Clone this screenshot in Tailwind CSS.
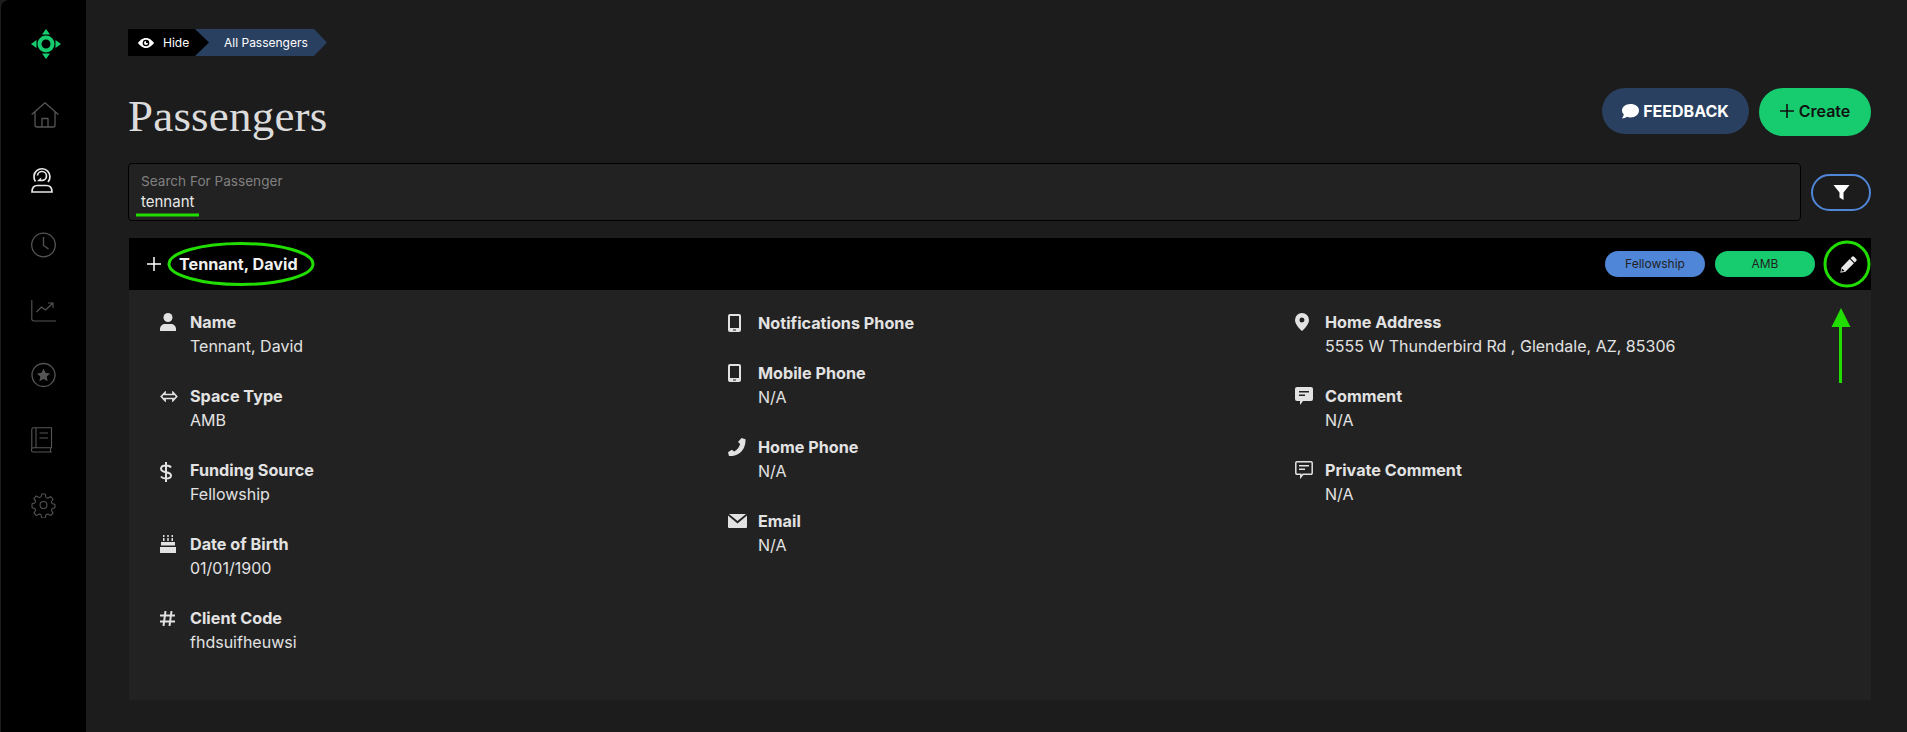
<!DOCTYPE html>
<html lang="en">
<head>
  <meta charset="UTF-8">
  <meta name="viewport" content="width=device-width, initial-scale=1.0">
  <title>Passengers</title>
  <script src="https://cdn.jsdelivr.net/npm/@tailwindcss/browser@4"></script>
</head>
<body class="bg-[#1c1c1c] font-['Inter',sans-serif] text-[#e2e2e2] h-[732px] overflow-hidden relative flex">

  <!-- Sidebar -->
  <nav class="w-[85px] ml-px h-full bg-black rounded-tl-lg flex flex-col items-start shrink-0 pt-[29px] pl-[30px]">
    <svg class="w-[30px] h-[30px] text-[#16cc6e]" viewBox="0 0 30 30" fill="currentColor">
      <circle cx="15" cy="15" r="6.500" fill="none" stroke="currentColor" stroke-width="4"/>
      <path d="M15 0l4 5.500h-8zM15 30l-4-5.500h8zM0 15l5.500-4v8zM30 15l-5.500 4v-8z"/>
    </svg>
    <div class="flex flex-col items-start gap-[39px] mt-[43px] text-[#555]">
      <svg class="w-[28px] h-[26px]" viewBox="0 0 28 26" fill="none" stroke="currentColor" stroke-width="1.300" stroke-linejoin="round"><path d="M.7 12.500L14 .8l13.300 11.700M4 9.500V23a2 2 0 0 0 2 2h16a2 2 0 0 0 2-2V9.500M11 25v-8.500h6V25"/></svg>
      <svg class="w-[22px] h-[26px] text-[#e8e8e8]" viewBox="0 0 22 26" fill="none" stroke="currentColor" stroke-width="1.700"><path d="M4.500 14.500A8 8 0 1 1 17 15"/><path d="M6.500 8.500a4.500 4.500 0 1 1 4.500 5H8l2-2"/><path d="M1 25c0-4.500 2.500-6.500 5.500-6.500h9c3 0 5.500 2 5.500 6.500z"/></svg>
      <svg class="w-[25px] h-[26px]" viewBox="0 0 25 26" fill="none" stroke="currentColor" stroke-width="1.300"><circle cx="12.500" cy="13" r="11.800"/><path d="M12.500 5v8.500l5 3.500"/></svg>
      <svg class="w-[25px] h-[26px]" viewBox="0 0 25 26" fill="none" stroke="currentColor" stroke-width="1.100"><path d="M.8 3v19a2 2 0 0 0 2 2H25"/><path d="M5.500 15l5-5 4 3 7-6.500M17 6h5v5"/></svg>
      <svg class="w-[25px] h-[26px]" viewBox="0 0 25 26" fill="none" stroke="currentColor" stroke-width="1.300"><circle cx="12.500" cy="13" r="11.500"/><path fill="currentColor" stroke="none" d="M12.500 6.500l2 4.300 4.600.6-3.400 3.200.9 4.600-4.100-2.300-4.100 2.300.9-4.600-3.400-3.200 4.600-.6z"/></svg>
      <svg class="w-[22px] h-[26px]" viewBox="0 0 22 26" fill="none" stroke="currentColor" stroke-width="1.100"><path d="M.8 22V2.500A1.700 1.700 0 0 1 2.500.8h18v20H2.500a2 2 0 0 0 0 4.200h18.300M5 .8v20M8.500 6h8.500M8.500 11h8.500M19.500 21v4"/></svg>
      <svg class="w-[25px] h-[26px]" viewBox="0 0 24 24" fill="none" stroke="currentColor" stroke-width="1" stroke-linejoin="round"><circle cx="12" cy="12" r="3.300"/><path d="M10.300 1.500h3.400l.7 3.200 1.800.8 2.700-1.600 2.300 2.600-1.600 2.400.7 1.800 2.700.6v3.400l-2.700.7-.7 1.800 1.600 2.400-2.300 2.600-2.700-1.600-1.800.8-.7 3h-3.400l-.7-3-1.800-.8-2.700 1.600-2.300-2.600 1.600-2.400-.7-1.800-2.700-.7V10.700l2.700-.6.7-1.800-1.600-2.400 2.300-2.600 2.700 1.600 1.800-.8z"/></svg>
    </div>
  </nav>

  <!-- Main -->
  <main class="flex-1 pl-[42px] pr-[36px] pt-[29px] min-w-0">
    <div class="flex h-[27px] text-[12px] text-white">
      <div class="w-[81px] bg-black flex items-center pl-[10px] gap-[9px] [clip-path:polygon(0_0,67px_0,81px_50%,67px_100%,0_100%)] relative z-10">
        <svg class="w-[16px] h-[16px]" viewBox="0 0 24 24" fill="currentColor"><path fill-rule="evenodd" d="M12 4.500C6.500 4.500 2.500 8.500 0 12c2.500 3.500 6.500 7.500 12 7.500s9.500-4 12-7.500c-2.500-3.500-6.500-7.500-12-7.500zM12 7a5 5 0 1 1 0 10 5 5 0 0 1 0-10z"/><path d="M12 9a3 3 0 1 0 3 3h-3z"/></svg>
        <span>Hide</span>
      </div>
      <div class="w-[132px] -ml-[14px] bg-[#2a4060] flex items-center pl-[29px] [clip-path:polygon(0_0,119px_0,132px_50%,119px_100%,0_100%)]">All Passengers</div>
    </div>

    <div class="flex justify-between items-start mt-[32px]">
      <h1 class="font-['Liberation_Serif',serif] text-[45px] leading-[56px] text-[#dcdcdc] tracking-[0.2px]">Passengers</h1>
      <div class="flex gap-[10px] items-start">
        <button class="w-[147px] h-[46px] rounded-full bg-[#2a4060] text-white font-bold text-[16px] flex items-center justify-center gap-[4px]">
          <svg class="w-[17px] h-[15px]" viewBox="0 0 17 15" fill="currentColor"><path d="M8.500 0C3.800 0 0 2.900 0 6.500c0 1.500.7 2.900 1.800 4C1.500 12 .6 13.400 0 14.500c1.800 0 3.700-.8 4.800-1.700 1.100.4 2.400.7 3.700.7 4.700 0 8.500-3 8.500-7S13.200 0 8.500 0z"/></svg>
          FEEDBACK
        </button>
        <button class="w-[112px] h-[48px] rounded-full bg-[#16cc6e] text-[#111] font-semibold text-[16px] flex items-center justify-center gap-[5px] pb-[2px]">
          <svg class="w-[14px] h-[14px]" viewBox="0 0 14 14" stroke="currentColor" stroke-width="1.600"><path d="M7 0v14M0 7h14"/></svg>
          Create
        </button>
      </div>
    </div>

    <div class="flex items-center gap-[10px] mt-[19px]">
      <div class="flex-1 h-[58px] bg-[#222] border border-black rounded-[4px] pl-[12px] pt-[7px]">
        <div class="text-[13.600px] leading-[20px] text-[#808080]">Search For Passenger</div>
        <div class="text-[15px] leading-[20px] text-[#e8e8e8] mt-px">tennant</div>
      </div>
      <button class="w-[60px] h-[37px] rounded-full border-2 border-[#4f86d8] bg-[#1c1c1c] flex items-center justify-center">
        <svg class="w-[17px] h-[15px] text-white" viewBox="0 0 16 15" fill="currentColor"><path d="M0 0h16L10 7.500V15l-4-2.500V7.500z"/></svg>
      </button>
    </div>

    <section class="mt-[17px] bg-[#222] h-[462px] ml-px">
      <div class="h-[52px] bg-black flex items-center pl-[18px]">
        <svg class="w-[14px] h-[14px] text-white" viewBox="0 0 14 14" stroke="currentColor" stroke-width="1.500"><path d="M7 0v14M0 7h14"/></svg>
        <span class="ml-[18px] font-bold text-[16.200px] text-[#f0f0f0]">Tennant, David</span>
        <span class="ml-auto w-[100px] h-[26px] rounded-full bg-[#4f86d8] text-[#222] text-[12px] flex items-center justify-center">Fellowship</span>
        <span class="ml-[10px] w-[100px] h-[26px] rounded-full bg-[#16cc6e] text-[#222] text-[12px] flex items-center justify-center">AMB</span>
        <span class="w-[46px] h-[46px] flex items-center justify-center ml-[10px]">
          <svg class="w-[17px] h-[17px] text-[#e8e8e8]" viewBox="0 0 17 17" fill="currentColor"><path d="M12 .8a1.500 1.500 0 0 1 2.100 0l2.100 2.100a1.500 1.500 0 0 1 0 2.100l-1.500 1.500-4.200-4.200zM9.700 3.100l4.200 4.200-8.500 8.500-4.900 1-.1-.1.900-4.900zM1.900 12.400l-.5 3.200 3.200-.5z" fill-rule="evenodd"/></svg>
        </span>
      </div>

      <div class="grid grid-cols-[568px_567px_1fr] pl-[31px] pt-[21px] text-[16px] leading-[24px]">
        <!-- Column 1 -->
        <div class="flex flex-col gap-[26px] -mt-px">
          <div class="flex">
            <div class="w-[30px] h-[24px] flex items-center"><svg class="w-[16px] h-[18px]" viewBox="0 0 16 18" fill="#e2e2e2"><circle cx="8" cy="4.500" r="4.500"/><path d="M0 18v-2c0-3 2.500-5 5-5h6c2.500 0 5 2 5 5v2z"/></svg></div>
            <div><div class="font-bold text-[16.200px]">Name</div><div>Tennant, David</div></div>
          </div>
          <div class="flex">
            <div class="w-[30px] h-[24px] flex items-center"><svg class="w-[18px] h-[11px]" viewBox="0 0 18 11" fill="none" stroke="#e2e2e2" stroke-width="1.700"><path d="M5 1.500L1.300 5.500 5 9.500V7.500h8v2l3.700-4L13 1.500v2H5z"/></svg></div>
            <div><div class="font-bold text-[16.200px]">Space Type</div><div>AMB</div></div>
          </div>
          <div class="flex">
            <div class="w-[30px] h-[24px] flex items-center"><svg class="w-[12px] h-[20px] mt-[3px]" viewBox="0 0 12 20" fill="none" stroke="#e2e2e2" stroke-width="2"><path d="M11 5.500C10 4 8 3.500 6 3.500c-2.500 0-5 1-5 3.300 0 2.500 2.500 3 5 3.400 2.500.4 5 1 5 3.300 0 2.200-2.500 3-5 3-2 0-4-.6-5-2M6 0v20"/></svg></div>
            <div><div class="font-bold text-[16.200px]">Funding Source</div><div>Fellowship</div></div>
          </div>
          <div class="flex">
            <div class="w-[30px] h-[24px] flex items-center"><svg class="w-[16px] h-[18px]" viewBox="0 0 16 18" fill="#e2e2e2"><path d="M3 3h1.500v3H3zM7.250 3h1.500v3h-1.500zM11.500 3H13v3h-1.500zM3 0h1.500v2H3zM7.250 0h1.500v2h-1.500zM11.500 0H13v2h-1.500zM1 7h14v3.500H1zM0 12h16v6H0z"/></svg></div>
            <div><div class="font-bold text-[16.200px]">Date of Birth</div><div>01/01/1900</div></div>
          </div>
          <div class="flex">
            <div class="w-[30px] h-[24px] flex items-center"><svg class="w-[15px] h-[15px]" viewBox="0 0 15 15" fill="none" stroke="#e2e2e2" stroke-width="2"><path d="M5.500 0L3.500 15M11.500 0L9.500 15M0 4.500h15M0 10.500h15"/></svg></div>
            <div><div class="font-bold text-[16.200px]">Client Code</div><div>fhdsuifheuwsi</div></div>
          </div>
        </div>

        <!-- Column 2 -->
        <div class="flex flex-col gap-[26px]">
          <div class="flex">
            <div class="w-[30px] h-[24px] flex items-center"><svg class="w-[13px] h-[18px]" viewBox="0 0 13 18" fill="#e2e2e2"><path fill-rule="evenodd" d="M2 0h9a2 2 0 0 1 2 2v14a2 2 0 0 1-2 2H2a2 2 0 0 1-2-2V2a2 2 0 0 1 2-2zM2 2v12h9V2zM5 15.500v1h3v-1z"/></svg></div>
            <div><div class="font-bold text-[16.200px]">Notifications Phone</div></div>
          </div>
          <div class="flex">
            <div class="w-[30px] h-[24px] flex items-center"><svg class="w-[13px] h-[18px]" viewBox="0 0 13 18" fill="#e2e2e2"><path fill-rule="evenodd" d="M2 0h9a2 2 0 0 1 2 2v14a2 2 0 0 1-2 2H2a2 2 0 0 1-2-2V2a2 2 0 0 1 2-2zM2 2v12h9V2zM5 15.500v1h3v-1z"/></svg></div>
            <div><div class="font-bold text-[16.200px]">Mobile Phone</div><div>N/A</div></div>
          </div>
          <div class="flex">
            <div class="w-[30px] h-[24px] flex items-center"><svg class="w-[18px] h-[18px]" viewBox="0 0 18 18" fill="#e2e2e2"><path d="M13.500 0l4 1.200c.3 6-2 10.500-5.200 13.300C9.500 17 5.500 18.500 1 18L0 14.300l3.800-2.500 2.400 1.800c2.700-1.500 5-4.200 5.900-7.600L10 4z"/></svg></div>
            <div><div class="font-bold text-[16.200px]">Home Phone</div><div>N/A</div></div>
          </div>
          <div class="flex">
            <div class="w-[30px] h-[24px] flex items-center"><svg class="w-[19px] h-[14px]" viewBox="0 0 19 14" fill="#e2e2e2"><path d="M1 0h17L9.500 7zM0 1.500l9.500 8 9.500-8V13a1 1 0 0 1-1 1H1a1 1 0 0 1-1-1z"/></svg></div>
            <div><div class="font-bold text-[16.200px]">Email</div><div>N/A</div></div>
          </div>
        </div>

        <!-- Column 3 -->
        <div class="flex flex-col gap-[26px] -mt-px">
          <div class="flex">
            <div class="w-[30px] h-[24px] flex items-center"><svg class="w-[14px] h-[18px]" viewBox="0 0 14 18" fill="#e2e2e2"><path fill-rule="evenodd" d="M7 0a7 7 0 0 1 7 7c0 4-4 8.500-7 11-3-2.500-7-7-7-11a7 7 0 0 1 7-7zM7 4.500a2.500 2.500 0 1 0 0 5 2.500 2.500 0 0 0 0-5z"/></svg></div>
            <div><div class="font-bold text-[16.200px]">Home Address</div><div>5555 W Thunderbird Rd , Glendale, AZ, 85306</div></div>
          </div>
          <div class="flex">
            <div class="w-[30px] h-[24px] flex items-center"><svg class="w-[18px] h-[18px]" viewBox="0 0 18 18" fill="#e2e2e2"><path fill-rule="evenodd" d="M2 0h14a2 2 0 0 1 2 2v10a2 2 0 0 1-2 2H8l-3 4v-4H2a2 2 0 0 1-2-2V2a2 2 0 0 1 2-2zM4 4v1.500h10V4zM4 7.500V9h6V7.500z"/></svg></div>
            <div><div class="font-bold text-[16.200px]">Comment</div><div>N/A</div></div>
          </div>
          <div class="flex">
            <div class="w-[30px] h-[24px] flex items-center"><svg class="w-[18px] h-[18px]" viewBox="0 0 18 18" fill="none" stroke="#e2e2e2" stroke-width="1.500"><path d="M2 .8h14A1.200 1.200 0 0 1 17.200 2v10a1.200 1.200 0 0 1-1.200 1.200H8L5.800 16v-2.800H2A1.200 1.200 0 0 1 .8 12V2A1.200 1.200 0 0 1 2 .8zM4 4.800h10M4 8.300h6"/></svg></div>
            <div><div class="font-bold text-[16.200px]">Private Comment</div><div>N/A</div></div>
          </div>
        </div>
      </div>
    </section>
  </main>

  <!-- Screenshot annotations -->
  <svg class="absolute top-0 left-0 w-[1907px] h-[732px] pointer-events-none" viewBox="0 0 1907 732" fill="none" stroke="#22dd00" stroke-width="3">
    <path d="M136 215h63"/>
    <ellipse cx="241" cy="264" rx="72" ry="20.500"/>
    <circle cx="1847" cy="264" r="22"/>
    <path d="M1840.500 383V325"/>
    <path fill="#22dd00" stroke="none" d="M1841 308l9.500 19h-19z"/>
  </svg>
</body>
</html>
